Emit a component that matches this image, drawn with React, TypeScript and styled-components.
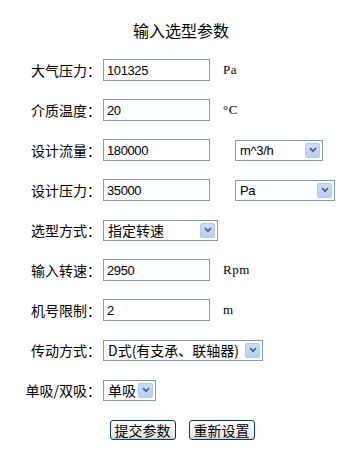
import styled, { createGlobalStyle } from "styled-components";
import { FC } from "react";

const GlobalStyle = createGlobalStyle`
    html, body {
        margin: 0;
        padding: 0;
        background: #ffffff;
    }
    body {
        font-family: "Noto Sans CJK SC", "Liberation Sans", sans-serif;
        color: #000000;
    }
`;

const Page = styled.div`
    width: 358px;
    height: 470px;
    display: flex;
    flex-direction: column;
`;

const Title = styled.h1`
    margin: 0;
    height: 50px;
    padding-top: 19px;
    box-sizing: border-box;
    font-size: 16px;
    font-weight: normal;
    line-height: 22px;
    text-align: center;
    padding-left: 4px;
`;

const Row = styled.div`
    height: 40px;
    display: flex;
    align-items: center;
`;

const Label = styled.span`
    width: 101px;
    text-align: right;
    font-size: 14px;
    line-height: 20px;
    white-space: nowrap;
    margin-right: 2px;
`;

const TextBox = styled.div`
    width: 107px;
    height: 22px;
    box-sizing: border-box;
    border: 1px solid #7f9db9;
    padding-left: 3px;
    display: flex;
    align-items: center;
    font-family: "Liberation Sans", Arial, sans-serif;
    font-size: 13px;
    letter-spacing: -0.4px;
`;

const Unit = styled.span`
    margin-left: 13px;
    font-family: "Liberation Serif", "Times New Roman", serif;
    font-size: 13px;
    line-height: 14px;
    letter-spacing: 0.5px;
`;

const SelectBox = styled.div<{ $w: number; $gap?: number }>`
    width: ${(p) => p.$w}px;
    height: 21px;
    margin-left: ${(p) => p.$gap ?? 0}px;
    box-sizing: border-box;
    border: 1px solid #7f9db9;
    display: flex;
    align-items: center;
    justify-content: space-between;
    padding: 0 2px 0 4px;
    font-size: 13px;
    line-height: 17px;
    white-space: nowrap;
`;

const SelectText = styled.span<{ $latin?: boolean }>`
    font-family: ${(p) =>
        p.$latin ? '"Liberation Sans", Arial, sans-serif' : '"Noto Sans CJK SC", sans-serif'};
    font-size: ${(p) => (p.$latin ? 13 : 14)}px;
    letter-spacing: ${(p) => (p.$latin ? "-0.3px" : "0")};
`;

const Arrow = styled.span`
    width: 15px;
    height: 15px;
    border-radius: 2px;
    background: linear-gradient(#cddcfd, #b9cdf6);
    border: 1px solid #b5c8f2;
    box-sizing: border-box;
    display: flex;
    align-items: center;
    justify-content: center;
    flex-shrink: 0;
`;

const ButtonRow = styled.div`
    height: 40px;
    display: flex;
    align-items: center;
    justify-content: center;
    gap: 13px;
    padding-left: 6px;
`;

const Button = styled.button`
    width: 66px;
    height: 20px;
    padding: 0;
    border: 1px solid #003c74;
    border-radius: 3px;
    background: linear-gradient(#ffffff, #ecebe6 80%, #d6d0c5);
    font-family: "Noto Sans CJK SC", sans-serif;
    font-size: 14px;
    line-height: 18px;
    color: #000000;
`;

const Chevron: FC = () => (
    <svg width="8" height="6" viewBox="0 0 8 6">
        <path d="M1 1.2 L4 4.2 L7 1.2" fill="none" stroke="#4d6185" strokeWidth="1.8" />
    </svg>
);

interface SelectProps {
    value: string;
    width: number;
    gap?: number;
    latin?: boolean;
}

const Select: FC<SelectProps> = ({ value, width, gap, latin }) => (
    <SelectBox $w={width} $gap={gap}>
        <SelectText $latin={latin}>{value}</SelectText>
        <Arrow>
            <Chevron />
        </Arrow>
    </SelectBox>
);

export default function App() {
    return (
        <Page>
            <GlobalStyle />
            <Title>输入选型参数</Title>
            <Row>
                <Label>大气压力：</Label>
                <TextBox>101325</TextBox>
                <Unit>Pa</Unit>
            </Row>
            <Row>
                <Label>介质温度：</Label>
                <TextBox>20</TextBox>
                <Unit>°C</Unit>
            </Row>
            <Row>
                <Label>设计流量：</Label>
                <TextBox>180000</TextBox>
                <Select value="m^3/h" width={88} gap={25} latin />
            </Row>
            <Row>
                <Label>设计压力：</Label>
                <TextBox>35000</TextBox>
                <Select value="Pa" width={100} gap={25} latin />
            </Row>
            <Row>
                <Label>选型方式：</Label>
                <Select value="指定转速" width={115} />
            </Row>
            <Row>
                <Label>输入转速：</Label>
                <TextBox>2950</TextBox>
                <Unit>Rpm</Unit>
            </Row>
            <Row>
                <Label>机号限制：</Label>
                <TextBox>2</TextBox>
                <Unit>m</Unit>
            </Row>
            <Row>
                <Label>传动方式：</Label>
                <Select value="D式(有支承、联轴器)" width={160} />
            </Row>
            <Row>
                <Label>单吸/双吸：</Label>
                <Select value="单吸" width={53} />
            </Row>
            <ButtonRow>
                <Button>提交参数</Button>
                <Button>重新设置</Button>
            </ButtonRow>
        </Page>
    );
}
